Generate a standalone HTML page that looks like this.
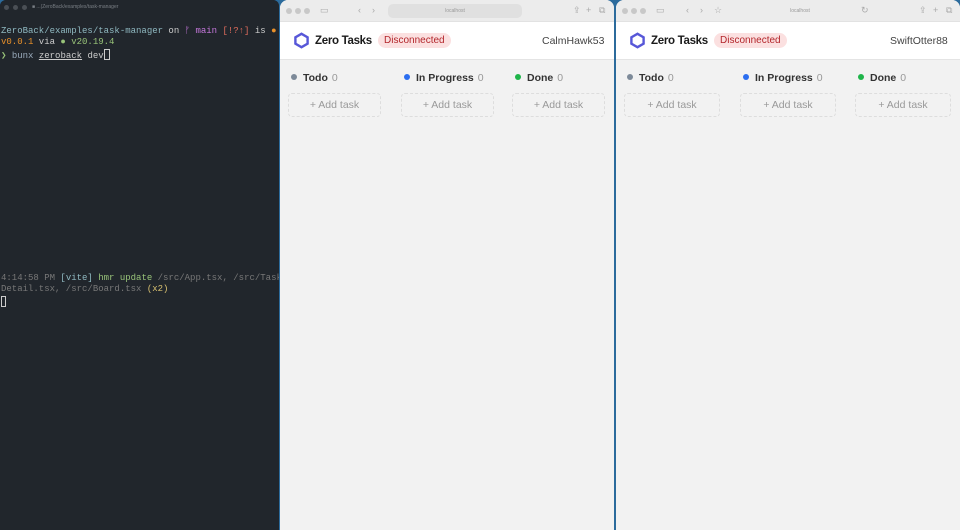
<!DOCTYPE html>
<html><head><meta charset="utf-8"><style>
*{margin:0;padding:0;box-sizing:border-box}
body{width:960px;height:530px;overflow:hidden;background:#2c6b9c;position:relative;font-family:"Liberation Sans",sans-serif}
.term{position:absolute;left:0;top:0;width:279px;height:530px;background:#21262c;border-radius:6px 6px 0 0;overflow:hidden}
.tbar{height:14px;background:#21262c;position:relative}
.tbar i{position:absolute;top:5px;width:5px;height:5px;border-radius:50%;background:#4a4f55}
.tbar span{position:absolute;left:32px;top:4px;font-size:5px;color:#7a7f85}
.mono{font-family:"Liberation Mono",monospace;font-size:9px;line-height:11.4px;white-space:pre;position:absolute;left:1px}
.br{position:absolute;top:0;height:530px;background:#f2f2f2;border-radius:8px 8px 0 0;overflow:hidden}
.tool{height:22px;background:#ececec;position:relative;border-bottom:1px solid #e2e2e2;color:#aaa;font-size:9px}
.tool i.d{position:absolute;top:8px;width:6px;height:6px;border-radius:50%;background:#c8c8c8}
.tool .ic{position:absolute;top:5px}
.url{position:absolute;top:4px;height:14px;border-radius:5px;font-size:5px;color:#999;text-align:center;line-height:14px}
.hdr{height:38px;background:#fff;border-bottom:1px solid #e4e4e4;position:relative}
.logo{position:absolute;top:10px}
.title{position:absolute;top:13px;font-size:11.5px;font-weight:bold;color:#1a1a1a;letter-spacing:-0.3px}
.badge{position:absolute;top:11px;height:15px;padding:0 6px;border-radius:8px;background:#fbe0e0;color:#b3262b;font-size:10px;line-height:15px}
.user{position:absolute;top:13px;font-size:10.5px;color:#444}
.col{position:absolute;top:60px}
.ch{position:absolute;top:12px;left:3px;font-size:10.5px;white-space:nowrap;color:#333;font-weight:bold}
.ch b{display:inline-block;width:6px;height:6px;border-radius:50%;margin-right:6px;vertical-align:1px}
.ch span{font-weight:normal;color:#999;margin-left:4px}
.add{position:absolute;top:33px;left:0;height:24px;border:1px dashed #ddd;border-radius:4px;text-align:center;line-height:22px;font-size:10.5px;color:#999}
</style></head><body>
<div class="term">
 <div class="tbar"><i style="left:4px"></i><i style="left:13px"></i><i style="left:22px"></i><span>■ ...(ZeroBack/examples/task-manager</span></div>
 <div class="mono" style="top:25.5px"><span style="color:#8fb8c0">ZeroBack/examples/task-manager</span><span style="color:#ccc"> on </span><span style="color:#c678dd">ᚠ main </span><span style="color:#e06c5c">[!?↑]</span><span style="color:#ccc"> is </span><span style="color:#e8902a">●</span></div>
 <div class="mono" style="top:37px"><span style="color:#e8902a">v0.0.1</span><span style="color:#ccc"> via </span><span style="color:#98c379">● v20.19.4</span></div>
 <div class="mono" style="top:48.5px;color:#ccc"><span style="color:#98c379">❯</span> <span style="color:#9ab">bunx</span> <u>zeroback</u> dev<span style="display:inline-block;width:6px;height:11px;border:1px solid #ccc;vertical-align:-2px"></span></div>
 <div class="mono" style="top:272.5px;color:#777">4:14:58 PM <span style="color:#8fb8c0">[vite]</span> <span style="color:#98c379">hmr update</span> /src/App.tsx, /src/Task</div>
 <div class="mono" style="top:284px;color:#777">Detail.tsx, /src/Board.tsx <span style="color:#d8c070">(x2)</span></div>
 <div class="mono" style="top:295.5px"><span style="display:inline-block;width:5px;height:11px;border:1px solid #ccc"></span></div>
</div>

<div class="br" style="left:280px;width:334px">
 <div class="tool"><i class="d" style="left:6px"></i><i class="d" style="left:15px"></i><i class="d" style="left:24px"></i>
  <span class="ic" style="left:40px">▭</span><span class="ic" style="left:78px">‹</span><span class="ic" style="left:92px">›</span>
  <div class="url" style="left:108px;width:134px;background:#e0e0e0">localhost</div>
  <span class="ic" style="left:293px">⇪</span><span class="ic" style="left:306px">+</span><span class="ic" style="left:319px">⧉</span></div>
 <div class="hdr">
  <svg class="logo" style="left:13px" width="17" height="17" viewBox="0 0 17 17"><polygon points="8.5,1.8 14.6,5.3 14.6,11.7 8.5,15.2 2.4,11.7 2.4,5.3" fill="none" stroke="#5757d8" stroke-width="2.4"/></svg>
  <div class="title" style="left:35px">Zero Tasks</div>
  <div class="badge" style="left:98px">Disconnected</div>
  <div class="user" style="left:262px">CalmHawk53</div>
 </div>
 <div class="col" style="left:8px"><div class="ch"><b style="background:#7d8a99"></b>Todo<span>0</span></div><div class="add" style="width:93px">+ Add task</div></div>
 <div class="col" style="left:121px"><div class="ch"><b style="background:#2b6ef0"></b>In Progress<span>0</span></div><div class="add" style="width:93px">+ Add task</div></div>
 <div class="col" style="left:232px"><div class="ch"><b style="background:#1fb54a"></b>Done<span>0</span></div><div class="add" style="width:93px">+ Add task</div></div>
</div>

<div class="br" style="left:616px;width:344px">
 <div class="tool"><i class="d" style="left:6px"></i><i class="d" style="left:15px"></i><i class="d" style="left:24px"></i>
  <span class="ic" style="left:40px">▭</span><span class="ic" style="left:70px">‹</span><span class="ic" style="left:84px">›</span><span class="ic" style="left:98px">☆</span>
  <div class="url" style="left:150px;width:68px">localhost</div>
  <span class="ic" style="left:245px">↻</span><span class="ic" style="left:303px">⇪</span><span class="ic" style="left:317px">+</span><span class="ic" style="left:330px">⧉</span></div>
 <div class="hdr">
  <svg class="logo" style="left:13px" width="17" height="17" viewBox="0 0 17 17"><polygon points="8.5,1.8 14.6,5.3 14.6,11.7 8.5,15.2 2.4,11.7 2.4,5.3" fill="none" stroke="#5757d8" stroke-width="2.4"/></svg>
  <div class="title" style="left:35px">Zero Tasks</div>
  <div class="badge" style="left:98px">Disconnected</div>
  <div class="user" style="left:274px">SwiftOtter88</div>
 </div>
 <div class="col" style="left:8px"><div class="ch"><b style="background:#7d8a99"></b>Todo<span>0</span></div><div class="add" style="width:96px">+ Add task</div></div>
 <div class="col" style="left:124px"><div class="ch"><b style="background:#2b6ef0"></b>In Progress<span>0</span></div><div class="add" style="width:96px">+ Add task</div></div>
 <div class="col" style="left:239px"><div class="ch"><b style="background:#1fb54a"></b>Done<span>0</span></div><div class="add" style="width:96px">+ Add task</div></div>
</div>
</body></html>
